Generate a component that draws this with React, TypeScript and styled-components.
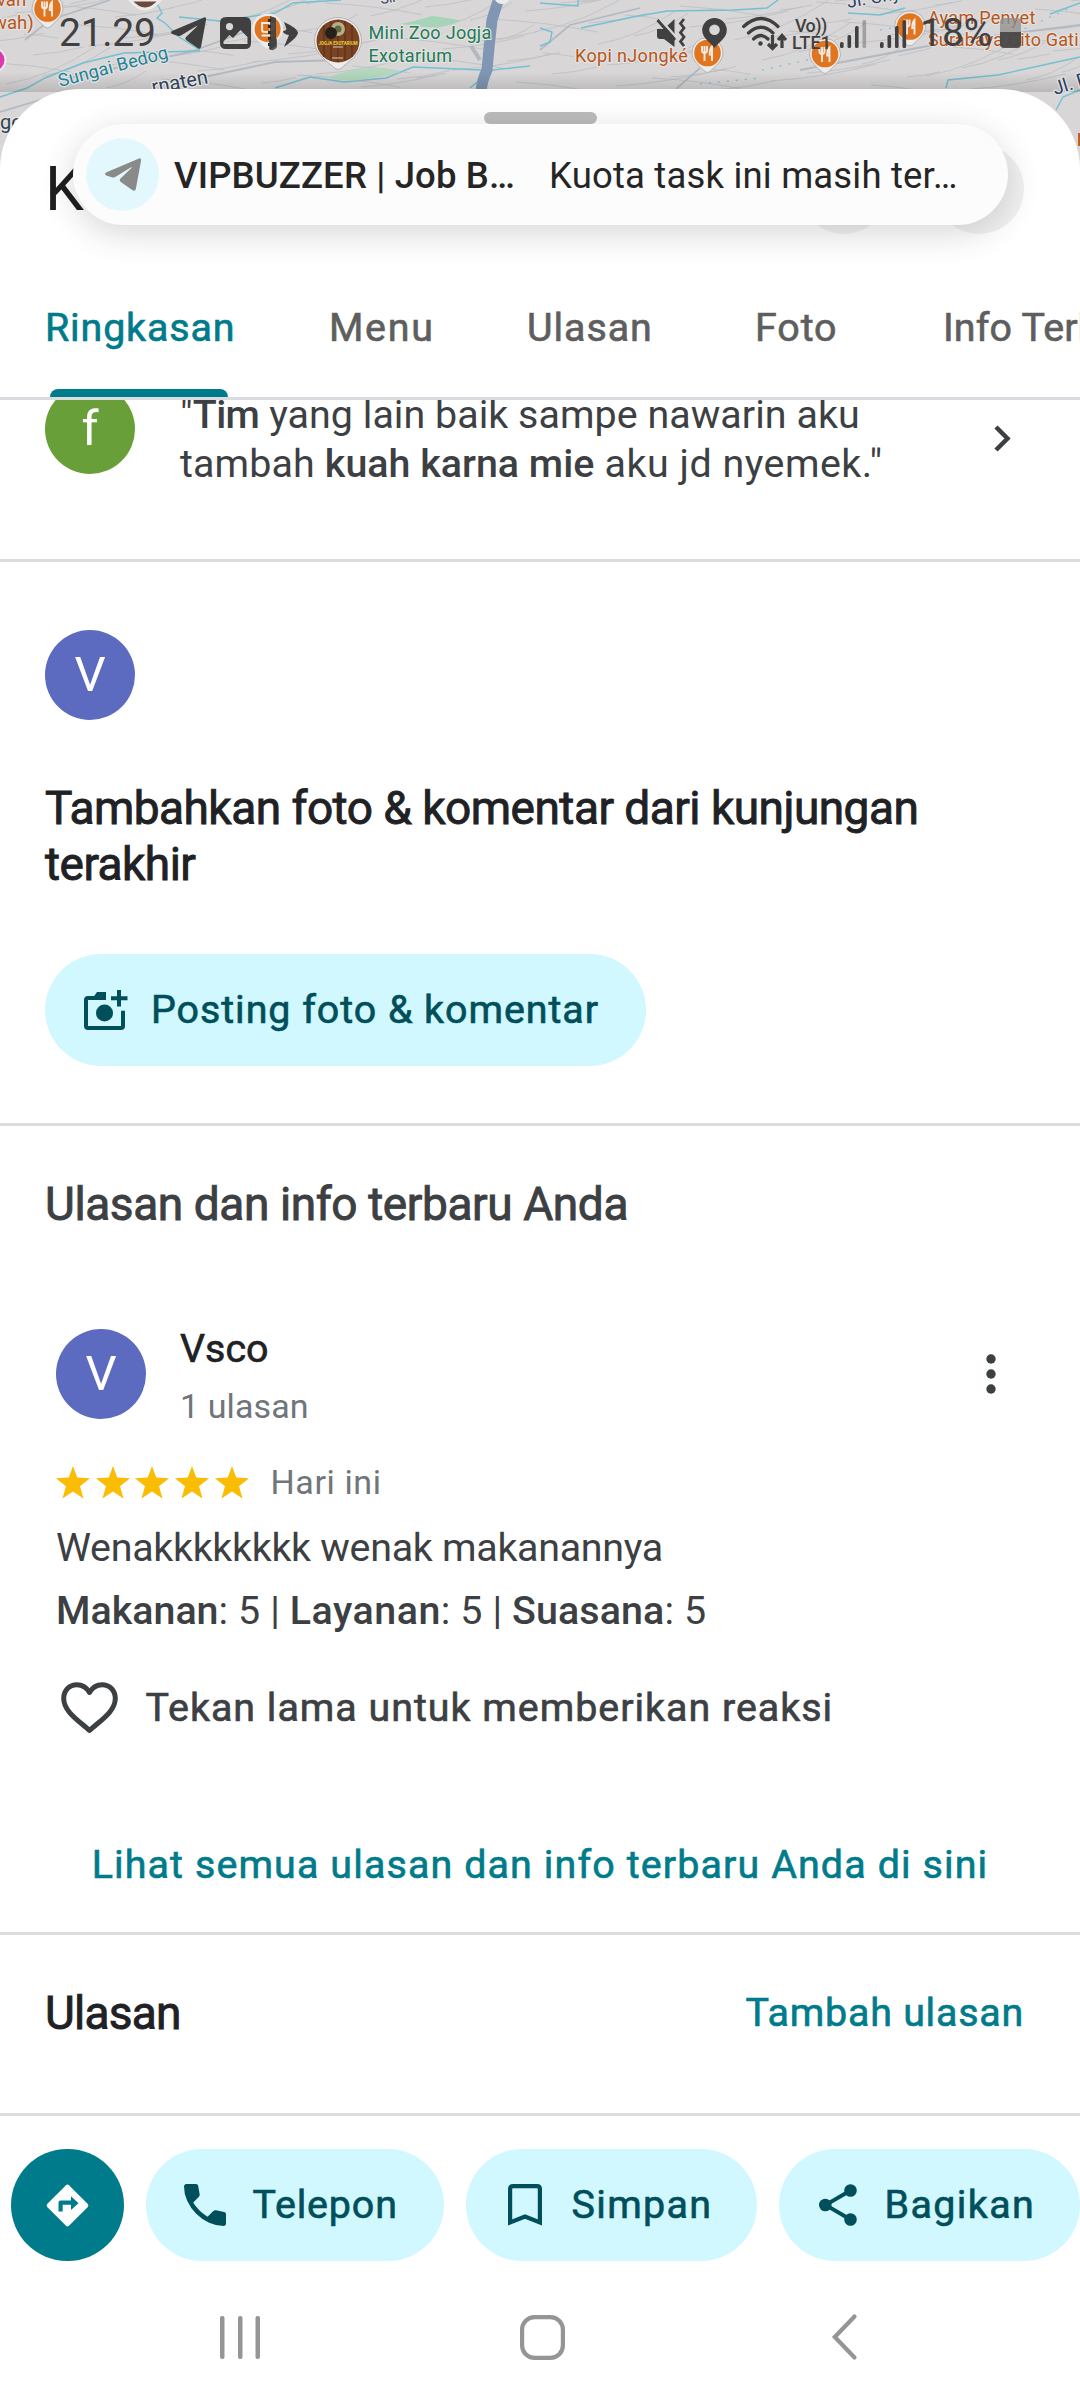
import React from "react";
import styled, { createGlobalStyle, css } from "styled-components";

const GlobalStyle = createGlobalStyle`
  * { box-sizing: border-box; }
  body { margin: 0; background: #fff; font-family: Roboto, "Noto Sans", sans-serif; }
  svg { display: block; flex: none; overflow: visible; }
`;

const c = {
  teal: "#007b8b",
  tealDark: "#004f5a",
  tint: "#d1f7ff",
  ink: "#202124",
  body: "#3c4043",
  muted: "#70757a",
  line: "#dadce0",
  status: "#404040",
};

/* label weight between regular and medium */
const label = css`
  font-family: Roboto, "Noto Sans", sans-serif;
  font-size: 39.4px;
  font-weight: 400;
  line-height: 48px;
  -webkit-text-stroke: 0.65px currentColor;
  white-space: nowrap;
`;

const Screen = styled.div`
  position: relative;
  display: flex;
  flex-direction: column;
  width: 1080px;
  height: 2408px;
  overflow: hidden;
  background: #fff;
`;

/* ---------- map ---------- */

const MapLayer = styled.div`
  position: absolute;
  top: 0;
  left: 0;
  width: 1080px;
  height: 180px;
  background: #d8d6d6;
`;

const roads = Array.from({ length: 120 }, (_, i) => {
  const x = (i * 173) % 1120 - 30;
  const y = (i * 37) % 92;
  const len = 22 + ((i * 29) % 90);
  const rise = i % 4 === 0 ? -len * 0.42 : i % 3 === 0 ? len * 0.12 : -len * 0.16;
  return `M${x} ${y}q${len / 2} ${rise * 0.2} ${len} ${rise}`;
}).join("");

const rivers = [
  "M155 0L162 13L157 18L165 23L179 37L200 50",
  "M0 97L27 88L45 78L83 63L124 53L200 51",
  "M179 17L220 21L275 13L293 3L341 0",
  "M275 88L310 77L344 82L386 78L413 67L482 70",
  "M470 88L492 70L530 66",
  "M540 3L578 6V0",
  "M540 28L552 32L550 42L540 46",
  "M581 28L633 17L667 11L733 10L767 8L778 0",
  "M848 13L880 15L905 8",
  "M946 88L948 80L998 75L1080 57",
  "M1056 110L1063 97L1080 90",
  "M1050 14L1080 3",
];

type PinProps = { x: number; y: number };
const FoodPin = ({ x, y }: PinProps) => (
  <g transform={`translate(${x} ${y})`}>
    <path d="M-15.5 0A15.5 15.5 0 1 1 15.5 0C15.5 8 7 14 2.500 18.500Q0 20.500-2.500 18.500C-7 14-15.500 8-15.500 0z" fill="#ececec" stroke="#b5b3b3" strokeWidth="1" />
    <circle r="13.300" fill="#e0741f" />
    <path d="M-5.500-7V-2.500Q-5.500 0-3 0Q-.5 0-.5-2.500V-7M-3-7V8M4.500 8V-6.500Q2.200-4 2.200 1.500H4.500" fill="none" stroke="#f3ebe4" strokeWidth="1.900" />
  </g>
);

const MapView = () => (
  <MapLayer>
    <svg width="1080" height="180" viewBox="0 0 1080 180" fontFamily="Roboto, sans-serif" fontWeight="400">
      <defs>
        <linearGradient id="shade" x1="0" y1="0" x2="0" y2="1">
          <stop offset="0" stopColor="#000" stopOpacity="0" />
          <stop offset="1" stopColor="#000" stopOpacity="0.14" />
        </linearGradient>
      </defs>
      <path d={roads} fill="none" stroke="#b9bdc4" strokeWidth="1" opacity=".75" />
      <path d="M25 40L50 20L110 0M540 50L570 25L640 8M676 89L700 68M60 80L190 52L250 30M190 80L275 62L340 60M800 70L960 40L1080 25M0 112L40 100L80 92" fill="none" stroke="#b3b9c1" strokeWidth="1.800" />
      <path d={rivers.join("")} fill="none" stroke="#74bfd2" strokeWidth="1.400" />
      <path d="M762 70L830 55M700 84L760 78M880 30L950 18M1000 40L1070 8" fill="none" stroke="#74bfd2" strokeWidth="1.200" strokeDasharray="2 7" />
      <path d="M400 24Q420 20 432 16Q450 18 461 21Q445 28 425 27z" fill="#a6d4b8" />
      <path d="M329 77Q350 68 380 68Q398 70 401 72Q380 77 360 80Q340 82 329 77z" fill="#b3d8be" />
      <path d="M499-2L492 20L489 48L487 70Q482 80 481 92" fill="none" stroke="#8096b3" strokeWidth="11" />
      <path d="M471 46L480 60" stroke="#b3b9c1" strokeWidth="4" />
      <circle cx="502" cy="-4" r="8" fill="#ececec" />
      <path d="M0 118L20 122" stroke="#e6dcc0" strokeWidth="4" />
      <rect y="72" width="1080" height="20" fill="url(#shade)" />

      <g stroke="#e4e2e2" strokeWidth="2.500" paintOrder="stroke" strokeLinejoin="round">
        <text x="-3" y="6" fontSize="18.500" fill="#b7561a">vah</text>
        <text x="-7" y="29" fontSize="18.500" fill="#b7561a">wah)</text>
        <text x="368.500" y="38.500" fontSize="18" letterSpacing=".3" fill="#217b56">Mini Zoo Jogja</text>
        <text x="368.500" y="61.800" fontSize="18" letterSpacing=".3" fill="#217b56">Exotarium</text>
        <text x="575" y="61.500" fontSize="18" letterSpacing=".35" fill="#b7561a">Kopi nJongké</text>
        <text x="928" y="24" fontSize="18" letterSpacing=".3" fill="#b7561a">Ayam Penyet</text>
        <text x="928" y="46" fontSize="18" letterSpacing=".15" fill="#b7561a">Surabaya Gito Gati</text>
        <text transform="translate(60 87) rotate(-15)" fontSize="18" letterSpacing=".2" fill="#1f8296">Sungai Bedog</text>
        <text transform="translate(153 94) rotate(-11)" fontSize="20" fill="#2f4257">rnaten</text>
        <text transform="translate(848 8) rotate(-10)" fontSize="18" fill="#2b3f66">Jl. Chy</text>
        <text transform="translate(1055 95) rotate(-17)" fontSize="19" fill="#2b3f66">Jl. P</text>
        <text x="0" y="129" fontSize="20" fill="#2f4257">go</text>
        <text transform="translate(381 4) rotate(-8)" fontSize="14" fill="#2b3f66">Sir</text>
      </g>
      <rect x="1078" y="133" width="4" height="13" fill="#c0601c" />
      <circle cx="-6" cy="60" r="11.500" fill="#d93ab0" stroke="#ececec" strokeWidth="2" />

      <path d="M130 0Q145 18 160 0z" fill="#6e4a3c" stroke="#ececec" strokeWidth="3" />
      <FoodPin x={47.5} y={8.5} />
      <FoodPin x={707.5} y={53} />
      <FoodPin x={825} y={54} />
      <FoodPin x={910} y={26.5} />
      <g transform="translate(267.600 29)">
        <path d="M-15.500 0A15.500 15.500 0 1 1 15.500 0C15.500 8 7 14 2.500 18.500Q0 20.500-2.500 18.500C-7 14-15.500 8-15.500 0z" fill="#ececec" />
        <circle r="13" fill="#e0741f" />
        <path d="M-5.500-6H3V1Q3 3 1 3H-3.500Q-5.500 3-5.500 1zM3-5H6V0H3M-6 6.500H5" fill="none" stroke="#f3ebe4" strokeWidth="2" />
      </g>
      <g transform="translate(338 41)">
        <path d="M-23.500 0A23.500 23.500 0 1 1 23.500 0C23.500 13 10 21 3 27.500Q0 29.500-3 27.500C-10 21-23.500 13-23.500 0z" fill="#ececec" stroke="#b5b3b3" />
        <circle r="21.500" fill="#7a4322" />
        <path d="M-14-16V16M-7-20V20M0-21V21M7-20V20M14-16V16" stroke="#5e3118" strokeWidth="1.200" />
        <circle cy="-12" r="7" fill="#b9ad86" />
        <circle cy="-12" r="3.500" fill="#5f6b45" />
        <path d="M-5 6H5M-6 17H5" stroke="#d8c9b0" strokeWidth="1" />
        <text y="3.500" fontSize="5.500" fontWeight="700" textAnchor="middle" textLength="39" lengthAdjust="spacingAndGlyphs" fill="#e8cf3a">JOGJA EXOTARIUM</text>
        <circle cx="-7" cy="-8" r="6" fill="#25201c" />
      </g>
    </svg>
  </MapLayer>
);

/* ---------- status bar ---------- */

const StatusBar = styled.div`
  position: absolute;
  top: 0;
  left: 0;
  width: 1080px;
  height: 66px;
  padding: 0 59px;
  display: flex;
  align-items: center;
  justify-content: space-between;
  color: ${c.status};
`;
const StatusLeft = styled.div`
  display: grid;
  grid-template-columns: 112px 49px 46px 34px;
  align-items: center;
`;
const StatusRight = styled.div`
  display: grid;
  grid-template-columns: 45.5px 40.5px 50px 48px 40px 40px 80px 21px;
  align-items: center;
`;
const StatusText = styled.span<{ $ls: number }>`
  font-size: 39px;
  line-height: 46px;
  letter-spacing: ${(p) => p.$ls}px;
`;
const TagBox = styled.div`
  display: flex;
  flex-direction: column;
  padding-top: 2px;
  font-size: 18px;
  font-weight: 500;
  line-height: 17.5px;
  white-space: nowrap;
`;
const TagTop = styled.span`
  padding-left: 3px;
  letter-spacing: -0.6px;
`;

const PaperPlane = ({ size }: { size: number }) => (
  <svg width={size} height={(size * 32) / 35} viewBox="0 0 35 32" fill="currentColor">
    <path d="M1 14L33 .4Q35.500-.2 35 3L30 30Q29.400 33 26.500 31L15 23Q13.500 21.500 15 20L26 9.500Q26.500 8.600 25 9.300L10 18.500Q8.500 19.300 6.500 18.700L1.200 17Q-1 15.600 1 14z" />
  </svg>
);

const SignalBars = ({ faint }: { faint: number }) => (
  <svg width="27" height="31" viewBox="0 0 27 31" fill="currentColor">
    <rect x="0" y="24" width="3.600" height="6" rx="1.500" />
    <rect x="7.500" y="17" width="3.600" height="13" rx="1.500" />
    <rect x="15" y="8" width="3.600" height="22" rx="1.500" />
    <rect x="22.500" y="2" width="3.600" height="28" rx="1.500" opacity={faint} />
  </svg>
);

const Status = () => (
  <StatusBar>
    <StatusLeft>
      <StatusText $ls={-0.26}>21.29</StatusText>
      <PaperPlane size={35} />
      <svg width="31" height="32" viewBox="0 0 31 32">
        <path fillRule="evenodd" fill="currentColor" d="M6 0H25Q31 0 31 6V26Q31 32 25 32H6Q0 32 0 26V6Q0 0 6 0zM9.500 6A3.600 3.600 0 1 0 9.500 13.200A3.600 3.600 0 1 0 9.500 6zM3.500 27H27.500V20L20.500 13L13 21L9.500 18L3.500 24.500z" />
      </svg>
      <svg width="34" height="34" viewBox="0 0 34 34">
        <path d="M4 0L10 2V30L4 34z" fill="currentColor" opacity=".9" />
        <path d="M3.500 3V32" stroke="#2b2b2b" strokeWidth="3" strokeDasharray="3 3" />
        <path d="M3 23H11V31Q8 36 3 33z" fill="currentColor" opacity=".8" />
        <path d="M18 6Q31 12 32 16.500Q32 21 18 31L23 19Q17 18 17 15Q20 15 20.500 13z" fill="currentColor" />
      </svg>
    </StatusLeft>
    <StatusRight>
      <svg width="31" height="30" viewBox="0 0 31 30" fill="currentColor">
        <path d="M1 11H8L18.500 1V29L8 21H4Q1 21 1 18z" />
        <path d="M3.500 .5L20 19" stroke="#d8d6d6" strokeWidth="2.500" />
        <path d="M1.500 2L19 22" stroke="currentColor" strokeWidth="2.800" />
        <path d="M28 1L24.500 5.500L28 10L24.500 14.500L28 19L24.500 23.500L28 28" fill="none" stroke="currentColor" strokeWidth="2.800" />
      </svg>
      <svg width="25" height="30" viewBox="0 0 25 30">
        <path fillRule="evenodd" fill="currentColor" d="M12.500 0A12.300 12.300 0 0 1 24.800 12.300C24.800 20 17 24 12.500 30C8 24 .2 20 .2 12.300A12.300 12.300 0 0 1 12.500 0zM12.500 6.500A5.300 5.300 0 1 0 12.500 17.100A5.300 5.300 0 1 0 12.500 6.500z" />
      </svg>
      <svg width="44" height="33" viewBox="0 0 44 33" fill="none" stroke="currentColor" strokeWidth="3.200" strokeLinecap="round">
        <path d="M1.600 9.500Q19-6.500 36 9.500M6.500 16Q19 4.500 31 16M11.500 22Q19 15 26 22" />
        <circle cx="18.500" cy="26.500" r="2.200" fill="currentColor" stroke="none" />
        <path d="M30.500 18V31M26 27L30.500 31.500L35 27M40 31V19M36 23L40 18.500L44 23" strokeLinecap="butt" />
      </svg>
      <TagBox>
        <TagTop>Vo))</TagTop>
        <span>LTE1</span>
      </TagBox>
      <SignalBars faint={0.35} />
      <SignalBars faint={1} />
      <StatusText $ls={0}>18%</StatusText>
      <svg width="21" height="30" viewBox="0 0 21 30">
        <rect width="21" height="29" y="0" rx="4" fill="#8e8e8e" opacity=".75" />
        <path d="M0 14H21V26Q21 30 17 30H4Q0 30 0 26z" fill="currentColor" opacity=".85" />
      </svg>
    </StatusRight>
  </StatusBar>
);

/* ---------- sheet ---------- */

const Sheet = styled.main`
  position: relative;
  flex: 1;
  display: flex;
  flex-direction: column;
  margin-top: 89px;
  border-radius: 80px 80px 0 0;
  background: #fff;
  overflow: hidden;
`;
const SheetTop = styled.header`
  display: flex;
  flex-direction: column;
  height: 136px;
  padding: 23px 56px 0 45px;
`;
const Handle = styled.div`
  align-self: center;
  width: 113px;
  height: 12px;
  margin-left: 11px;
  border-radius: 6px;
  background: #bcbcbc;
`;
const TitleRow = styled.div`
  display: flex;
  align-items: center;
  gap: 45px;
  height: 72px;
  margin-top: 29px;
`;
const Title = styled.h1`
  flex: 1;
  margin: 0;
  font-size: 62px;
  font-weight: 400;
  line-height: 72px;
  color: #1f1f1f;
`;
const RoundAction = styled.span`
  width: 90px;
  height: 90px;
  border-radius: 50%;
  background: #f1f1f1;
`;

const TabBar = styled.nav`
  display: grid;
  grid-template-columns: 284px 198px 228px 188px auto;
  height: 175px;
  padding-left: 45px;
  border-bottom: 3px solid ${c.line};
  overflow: hidden;
`;
const Tab = styled.div<{ $active?: boolean; $ls: number }>`
  ${label}
  display: flex;
  flex-direction: column;
  justify-content: space-between;
  justify-self: start;
  padding-top: 78.5px;
  letter-spacing: ${(p) => p.$ls}px;
  color: ${(p) => (p.$active ? c.teal : "#5e5e5e")};
`;
const TabIndicator = styled.span`
  width: 178px;
  height: 8px;
  margin-left: 5px;
  border-radius: 8px 8px 0 0;
  background: ${c.teal};
`;

const Section = styled.section<{ $top: number; $height: number }>`
  display: flex;
  flex-direction: column;
  flex: none;
  height: ${(p) => p.$height}px;
  padding: ${(p) => p.$top}px 45px 0;
  border-bottom: 3px solid ${c.line};
  overflow: hidden;
`;

const Avatar = styled.span<{ $color: string }>`
  display: flex;
  flex: none;
  align-items: center;
  justify-content: center;
  width: 90px;
  height: 90px;
  border-radius: 50%;
  background: ${(p) => p.$color};
  color: #fff;
  font-size: 49px;
  line-height: 90px;
`;

const SnippetRow = styled.div`
  display: flex;
  align-items: flex-start;
  gap: 45px;
  margin-top: -16px;
`;
const SnippetText = styled.p`
  flex: 1;
  margin: 5.5px 0 0;
  font-size: 39.4px;
  line-height: 49px;
  letter-spacing: 0.14px;
  white-space: nowrap;
  color: ${c.body};
`;
const Spaced = styled.span<{ $ls: number }>`
  letter-spacing: ${(p) => p.$ls}px;
`;
const ChevronSlot = styled.span`
  padding: 41px 24px 0 0;
`;

const Heading = styled.h2<{ $color?: string; $ls: number }>`
  margin: 0;
  font-size: 46px;
  font-weight: 400;
  line-height: 56px;
  -webkit-text-stroke: 0.9px currentColor;
  letter-spacing: ${(p) => p.$ls}px;
  color: ${(p) => p.$color ?? c.ink};
`;
const PromptHeading = styled(Heading)`
  margin-top: 60.3px;
`;

const Pill = styled.button<{ $width: number; $padding: number; $gap: number; $ls: number }>`
  ${label}
  display: flex;
  flex: none;
  align-items: center;
  gap: ${(p) => p.$gap}px;
  width: ${(p) => p.$width}px;
  height: 112px;
  padding: 0 0 0 ${(p) => p.$padding}px;
  border: 0;
  border-radius: 56px;
  background: ${c.tint};
  color: ${c.tealDark};
  letter-spacing: ${(p) => p.$ls}px;
`;
const PromptPill = styled(Pill)`
  margin-top: 61.5px;
`;

const Author = styled.div`
  display: flex;
  align-items: flex-start;
  margin: 92px 0 0 11px;
  height: 104px;
`;
const AuthorAvatar = styled(Avatar)`
  margin-top: 5px;
`;
const AuthorInfo = styled.div`
  display: flex;
  flex: 1;
  flex-direction: column;
  gap: 10.5px;
  padding: 1px 0 0 34px;
`;
const AuthorName = styled.span`
  ${label}
  color: ${c.ink};
`;
const Muted = styled.span<{ $ls: number }>`
  font-size: 34px;
  line-height: 44px;
  letter-spacing: ${(p) => p.$ls}px;
  color: ${c.muted};
`;
const KebabSlot = styled.span`
  padding: 29.5px 39.5px 0 0;
`;
const RatingRow = styled.div`
  display: flex;
  align-items: center;
  gap: 5.7px;
  margin: 32px 0 0 11px;
  height: 44px;
`;
const RatingDate = styled(Muted)`
  margin-left: 16px;
`;
const ReviewLine = styled.p<{ $top: number; $ls: number }>`
  margin: ${(p) => p.$top}px 0 0 11px;
  font-size: 39.4px;
  line-height: 50px;
  letter-spacing: ${(p) => p.$ls}px;
  color: ${c.body};
`;
const Strong = styled.b<{ $ls?: number }>`
  font-weight: 500;
  letter-spacing: ${(p) => p.$ls ?? 0}px;
`;
const ReactionRow = styled.div`
  ${label}
  display: flex;
  align-items: center;
  gap: 28px;
  height: 52px;
  margin: 46px 0 0 15.5px;
  letter-spacing: 0.99px;
  color: ${c.body};
`;
const Link = styled.a<{ $ls: number }>`
  ${label}
  letter-spacing: ${(p) => p.$ls}px;
  color: ${c.teal};
`;
const CenterLink = styled(Link)`
  align-self: center;
  margin-top: 107.5px;
`;
const SplitRow = styled.div`
  display: flex;
  align-items: center;
  justify-content: space-between;
  padding-right: 11px;
`;

const ActionBar = styled.div`
  display: flex;
  flex: none;
  gap: 22px;
  height: 145px;
  padding: 33px 0 0 11px;
`;
const DirectionsButton = styled.button`
  display: flex;
  flex: none;
  align-items: center;
  justify-content: center;
  width: 113px;
  height: 112px;
  padding: 0;
  border: 0;
  border-radius: 56px;
  background: ${c.teal};
`;

const SystemNav = styled.footer`
  display: grid;
  grid-template-columns: 219.5px 300px 312.5px auto;
  align-items: center;
  height: 147px;
  padding-top: 5px;
  color: #959595;
`;

/* ---------- heads-up notification ---------- */

const Notice = styled.aside`
  position: absolute;
  top: 124px;
  left: 73px;
  display: flex;
  align-items: center;
  width: 935px;
  height: 101px;
  padding-left: 13px;
  border-radius: 51px;
  background: #fcfcfc;
  box-shadow: 0 8px 34px rgba(0, 0, 0, 0.16);
  color: #252525;
  font-size: 36.5px;
  line-height: 46px;
  white-space: nowrap;
`;
const NoticeIcon = styled.span`
  display: flex;
  flex: none;
  align-items: center;
  justify-content: center;
  width: 73px;
  height: 73px;
  border-radius: 50%;
  background: #e3f8fd;
  color: #8a8a8a;
`;
const NoticeTitle = styled.span`
  flex: none;
  width: 390px;
  padding: 3px 0 0 15px;
  font-weight: 500;
  letter-spacing: 0.14px;
`;
const NoticeBody = styled.span`
  padding-top: 3px;
  letter-spacing: 0.18px;
`;

/* ---------- icons ---------- */

const CameraPlus = () => (
  <svg width="43.500" height="40" viewBox="0 0 43.500 40" fill="none" stroke="currentColor" strokeWidth="4">
    <path d="M22 8H4Q2 8 2 10V36Q2 38 4 38H37Q39 38 39 36V20.700M35 0V16.500M27 8.200H43.500" />
    <path d="M9.500 7L13 2H22V10H9.500z" fill="currentColor" stroke="none" />
    <circle cx="20.500" cy="23" r="8.500" fill="currentColor" stroke="none" />
  </svg>
);
const Star = () => (
  <svg width="34" height="33" viewBox="0 0 34 33" fill="#fbbc04">
    <path d="M17 0L21.200 11.600L34 12.200L24 20.200L27.500 32.500L17 25.500L6.500 32.500L10 20.200L0 12.200L12.800 11.600z" />
  </svg>
);
const Heart = () => (
  <svg width="57" height="52" viewBox="0 0 57 52" fill="none" stroke="currentColor" strokeWidth="5">
    <path d="M28.500 48.500C19 39.500 2.700 30 2.700 16.500C2.700 8.300 8.500 2.700 15.800 2.700C21.500 2.700 26 6 28.500 10.500C31 6 35.500 2.700 41.200 2.700C48.500 2.700 54.300 8.300 54.300 16.500C54.300 30 38 39.500 28.500 48.500z" strokeLinejoin="round" />
  </svg>
);
const Kebab = () => (
  <svg width="10" height="40" viewBox="0 0 10 40" fill={c.body}>
    <circle cx="5" cy="5" r="4.700" />
    <circle cx="5" cy="20" r="4.700" />
    <circle cx="5" cy="35" r="4.700" />
  </svg>
);
const Phone = () => (
  <svg width="42" height="42" viewBox="120 -840 720 720" fill="currentColor">
    <path d="M798-120q-125 0-247-54.500T329-329Q229-429 174.500-551T120-798q0-18 12-30t30-12h162q14 0 25 9.500t13 22.500l26 140q2 16-1 27t-11 19l-97 98q20 37 47.500 71.500T387-386q31 31 65 57.500t72 48.500l94-94q9-9 23.500-13.500T670-390l138 28q14 4 23 14.500t9 23.500v162q0 18-12 30t-30 12Z" />
  </svg>
);
const Bookmark = () => (
  <svg width="34" height="42" viewBox="0 0 34 42" fill="none" stroke="currentColor" strokeWidth="4.200">
    <path d="M2.100 38.500V5Q2.100 2.100 5 2.100H29Q31.900 2.100 31.900 5V38.500L17 32.500z" />
  </svg>
);
const Share = () => (
  <svg width="38" height="42" viewBox="0 0 38 42" fill="currentColor">
    <path d="M31.500 6.500L6.500 21L31.500 35.500" fill="none" stroke="currentColor" strokeWidth="3.800" />
    <circle cx="31.500" cy="6.500" r="6.300" />
    <circle cx="6.300" cy="21" r="6.300" />
    <circle cx="31.500" cy="35.500" r="6.300" />
  </svg>
);
const Directions = () => (
  <svg width="43" height="43" viewBox="0 0 43 43">
    <path d="M23 1.200L41.800 20Q43 21.500 41.800 23L23 41.800Q21.500 43 20 41.800L1.200 23Q0 21.500 1.200 20L20 1.200Q21.500 0 23 1.200z" fill="#fff" />
    <path d="M12.500 27.500V18.500Q12.500 16.500 14.500 16.500H25V12.300L32.500 19.200L25 26V20.700H16.700V27.500z" fill={c.teal} />
  </svg>
);

const tabs = [
  { label: "Ringkasan", ls: 0.85, active: true },
  { label: "Menu", ls: 1.7 },
  { label: "Ulasan", ls: 0.95 },
  { label: "Foto", ls: 0.9 },
  { label: "Info Terbaru", ls: 0.15 },
];

export default function App() {
  return (
    <Screen>
      <GlobalStyle />
      <MapView />
      <Sheet>
        <SheetTop>
          <Handle />
          <TitleRow>
            <Title>K</Title>
            <RoundAction />
            <RoundAction />
          </TitleRow>
        </SheetTop>
        <TabBar>
          {tabs.map((t) => (
            <Tab key={t.label} $active={t.active} $ls={t.ls}>
              {t.label}
              {t.active && <TabIndicator />}
            </Tab>
          ))}
        </TabBar>

        <Section $top={0} $height={162}>
          <SnippetRow>
            <Avatar $color="#689f38">f</Avatar>
            <SnippetText>
              "<Strong $ls={-0.6}>Tim</Strong><Spaced $ls={0.04}> yang lain baik sampe nawarin aku</Spaced>
              <br />
              tambah <Strong>kuah karna mie</Strong>
              <Spaced $ls={0.5}> aku jd nyemek."</Spaced>
            </SnippetText>
            <ChevronSlot>
              <svg width="17" height="27" viewBox="0 0 17 27" fill="none" stroke={c.body} strokeWidth="4.500">
                <path d="M2 2L13.500 13.500L2 25" />
              </svg>
            </ChevronSlot>
          </SnippetRow>
        </Section>

        <Section $top={68} $height={564}>
          <Avatar $color="#5c6bc0">V</Avatar>
          <PromptHeading $ls={-0.52}>
            Tambahkan foto &amp; komentar dari kunjungan
            <br />
            terakhir
          </PromptHeading>
          <PromptPill $width={601} $padding={38.5} $gap={24} $ls={0.96}>
            <CameraPlus />
            Posting foto &amp; komentar
          </PromptPill>
        </Section>

        <Section $top={50} $height={809}>
          <Heading $color={c.body} $ls={-0.4}>Ulasan dan info terbaru Anda</Heading>
          <Author>
            <AuthorAvatar $color="#5c6bc0">V</AuthorAvatar>
            <AuthorInfo>
              <AuthorName>Vsco</AuthorName>
              <Muted $ls={0.1}>1 ulasan</Muted>
            </AuthorInfo>
            <KebabSlot>
              <Kebab />
            </KebabSlot>
          </Author>
          <RatingRow>
            {[1, 2, 3, 4, 5].map((n) => (
              <Star key={n} />
            ))}
            <RatingDate $ls={0.6}>Hari ini</RatingDate>
          </RatingRow>
          <ReviewLine $top={18.5} $ls={-0.28}>Wenakkkkkkkk wenak makanannya</ReviewLine>
          <ReviewLine $top={13} $ls={0.1}>
            <Strong $ls={0}>Makanan</Strong>: 5 | <Strong $ls={0.5}>Layanan</Strong>: 5 | <Strong $ls={0.1}>Suasana</Strong>: 5
          </ReviewLine>
          <ReactionRow>
            <Heart />
            Tekan lama untuk memberikan reaksi
          </ReactionRow>
          <CenterLink $ls={1.12}>Lihat semua ulasan dan info terbaru Anda di sini</CenterLink>
        </Section>

        <Section $top={49.5} $height={181}>
          <SplitRow>
            <Heading $ls={-0.75}>Ulasan</Heading>
            <Link $ls={0.77}>Tambah ulasan</Link>
          </SplitRow>
        </Section>

        <ActionBar>
          <DirectionsButton>
            <Directions />
          </DirectionsButton>
          <Pill $width={298} $padding={38} $gap={26.5} $ls={0.85}>
            <Phone />
            Telepon
          </Pill>
          <Pill $width={291} $padding={42} $gap={29.5} $ls={1.35}>
            <Bookmark />
            Simpan
          </Pill>
          <Pill $width={301} $padding={40} $gap={27.5} $ls={1.4}>
            <Share />
            Bagikan
          </Pill>
        </ActionBar>

        <SystemNav>
          <span />
          <svg width="41" height="43" viewBox="0 0 41 43" fill="currentColor">
            <rect width="4.500" height="43" rx="2" />
            <rect x="18" width="4.500" height="43" rx="2" />
            <rect x="35.500" width="4.500" height="43" rx="2" />
          </svg>
          <svg width="45" height="45" viewBox="0 0 45 45" fill="none" stroke="currentColor" strokeWidth="4.200">
            <rect x="2.100" y="2.100" width="40.800" height="40.800" rx="12.500" />
          </svg>
          <svg width="25" height="46" viewBox="0 0 25 46" fill="none" stroke="currentColor" strokeWidth="4.200" strokeLinecap="round">
            <path d="M22.500 2.500L2.800 23L22.500 43.500" />
          </svg>
        </SystemNav>
      </Sheet>
      <Status />
      <Notice>
        <NoticeIcon>
          <PaperPlane size={36} />
        </NoticeIcon>
        <NoticeTitle>VIPBUZZER | Job B…</NoticeTitle>
        <NoticeBody>Kuota task ini masih ter…</NoticeBody>
      </Notice>
    </Screen>
  );
}
